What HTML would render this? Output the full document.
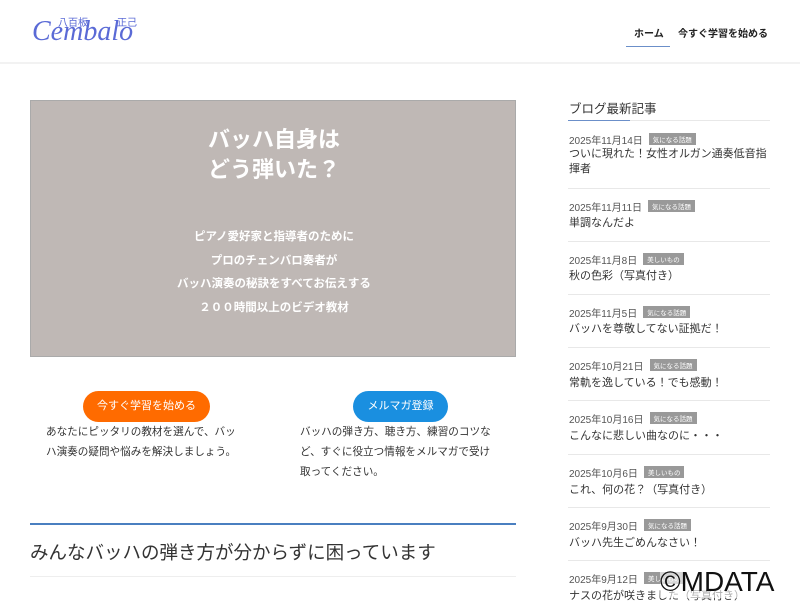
<!DOCTYPE html>
<html><head><meta charset="utf-8"><style>
body{margin:0;width:800px;height:600px;overflow:hidden;background:#fff;font-family:"Liberation Sans","Noto Sans CJK JP",sans-serif;color:#333;position:relative}
.a{position:absolute;white-space:nowrap}
.hdr{position:absolute;left:0;top:0;width:800px;height:62px;border-bottom:2px solid #f2f2f2}
.hero{position:absolute;left:30px;top:100px;width:486px;height:257px;background:#bfb8b5;border:1px solid #aaa;box-sizing:border-box}
.w{color:#fff;font-weight:bold;text-align:center;width:486px;left:0}
.btn{position:absolute;height:31px;border-radius:16px;color:#fff;font-size:11px;line-height:31px;text-align:center}
.p{font-size:10.6px;line-height:20px;color:#333}
.date{font-size:10px;color:#555}
.tag{display:inline-block;background:#999;color:#fff;font-size:6.5px;padding:1px 4px;margin-left:6px;vertical-align:2px}
.tt{font-size:11px;color:#333}
.hr{position:absolute;left:568px;width:202px;height:1px;background:#e8e8e8}
</style></head><body>
<div class="hdr"></div>
<div class="a" style="left:58px;top:14px;font-size:10px;color:#5a6ad6">八百板</div>
<div class="a" style="left:117px;top:14px;font-size:10px;color:#5a6ad6">正己</div>
<div class="a" style="left:32px;top:16px;font-size:28px;font-style:italic;font-family:'Liberation Serif',serif;color:#5a6ad6">Cembalo</div>
<div class="a" style="left:634px;top:25px;font-size:10px;font-weight:bold;color:#222">ホーム</div>
<div class="a" style="left:626px;top:46px;width:44px;height:1px;background:#6b8fc9"></div>
<div class="a" style="left:678px;top:25px;font-size:10px;font-weight:bold;color:#222">今すぐ学習を始める</div>

<div class="hero">
<div class="a w" style="top:24px;font-size:22px;line-height:30px">バッハ自身は<br>どう弾いた？</div>
<div class="a w" style="top:125px;font-size:11.5px;line-height:23.5px">ピアノ愛好家と指導者のために<br>プロのチェンバロ奏者が<br>バッハ演奏の秘訣をすべてお伝えする<br>２００時間以上のビデオ教材</div>
</div>

<div class="btn" style="left:83px;top:391px;width:127px;background:#ff6b00">今すぐ学習を始める</div>
<div class="btn" style="left:353px;top:391px;width:95px;background:#1a8fe0">メルマガ登録</div>
<div class="a p" style="left:46px;top:422px">あなたにピッタリの教材を選んで、バッ<br>ハ演奏の疑問や悩みを解決しましょう。</div>
<div class="a p" style="left:300px;top:422px">バッハの弾き方、聴き方、練習のコツな<br>ど、すぐに役立つ情報をメルマガで受け<br>取ってください。</div>
<div class="a" style="left:30px;top:523px;width:486px;height:2px;background:#4a7fc0"></div>
<div class="a" style="left:30px;top:539px;font-size:18.5px;color:#333">みんなバッハの弾き方が分からずに困っています</div>
<div class="a" style="left:30px;top:576px;width:486px;height:1px;background:#eee"></div>

<div class="a" style="left:569px;top:98px;font-size:12.5px;color:#333">ブログ最新記事</div>
<div class="hr" style="top:120px"></div>
<div class="a" style="left:568px;top:120px;width:62px;height:1px;background:#6b8fc9"></div>

<div class="a" style="left:569px;top:131px"><span class="date">2025年11月14日</span><span class="tag">気になる話題</span></div>
<div class="a tt" style="left:569px;top:147px;line-height:15px">ついに現れた！女性オルガン通奏低音指<br>揮者</div>
<div class="hr" style="top:188px"></div>
<div class="a" style="left:569px;top:198px"><span class="date">2025年11月11日</span><span class="tag">気になる話題</span></div>
<div class="a tt" style="left:569px;top:214px">単調なんだよ</div>
<div class="hr" style="top:241px"></div>
<div class="a" style="left:569px;top:251px"><span class="date">2025年11月8日</span><span class="tag">美しいもの</span></div>
<div class="a tt" style="left:569px;top:267px">秋の色彩（写真付き）</div>
<div class="hr" style="top:294px"></div>
<div class="a" style="left:569px;top:304px"><span class="date">2025年11月5日</span><span class="tag">気になる話題</span></div>
<div class="a tt" style="left:569px;top:320px">バッハを尊敬してない証拠だ！</div>
<div class="hr" style="top:347px"></div>
<div class="a" style="left:569px;top:357px"><span class="date">2025年10月21日</span><span class="tag">気になる話題</span></div>
<div class="a tt" style="left:569px;top:374px">常軌を逸している！でも感動！</div>
<div class="hr" style="top:400px"></div>
<div class="a" style="left:569px;top:410px"><span class="date">2025年10月16日</span><span class="tag">気になる話題</span></div>
<div class="a tt" style="left:569px;top:427px">こんなに悲しい曲なのに・・・</div>
<div class="hr" style="top:454px"></div>
<div class="a" style="left:569px;top:464px"><span class="date">2025年10月6日</span><span class="tag">美しいもの</span></div>
<div class="a tt" style="left:569px;top:481px">これ、何の花？（写真付き）</div>
<div class="hr" style="top:507px"></div>
<div class="a" style="left:569px;top:517px"><span class="date">2025年9月30日</span><span class="tag">気になる話題</span></div>
<div class="a tt" style="left:569px;top:534px">バッハ先生ごめんなさい！</div>
<div class="hr" style="top:560px"></div>
<div class="a" style="left:569px;top:570px"><span class="date">2025年9月12日</span><span class="tag">美しいもの</span></div>
<div class="a tt" style="left:569px;top:587px">ナスの花が咲きました（写真付き）</div>
<div class="a" style="left:660px;top:566px;font-size:28px;color:#111;background:rgba(255,255,255,.6)">©MDATA</div>
</body></html>
